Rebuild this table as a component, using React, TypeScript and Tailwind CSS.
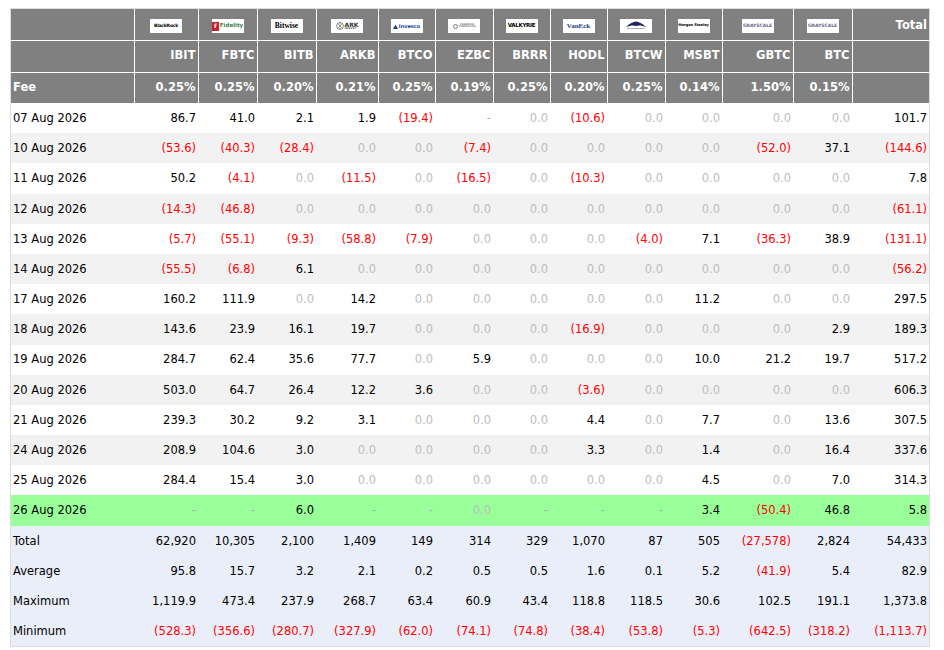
const tickers = ["IBIT", "FBTC", "BITB", "ARKB", "BTCO", "EZBC", "BRRR", "HODL", "BTCW", "MSBT", "GBTC", "BTC"]
const fees = ["0.25%", "0.25%", "0.20%", "0.21%", "0.25%", "0.19%", "0.25%", "0.20%", "0.25%", "0.14%", "1.50%", "0.15%"]
const widths = [123, 64, 59, 59, 62, 57, 58, 57, 57, 58, 57, 71, 59, 77]

type Row = { label: string; values: string[]; kind?: "today" | "summary" }

const rows: Row[] = [
  { label: "07 Aug 2026", values: ["86.7", "41.0", "2.1", "1.9", "(19.4)", "-", "0.0", "(10.6)", "0.0", "0.0", "0.0", "0.0", "101.7"] },
  { label: "10 Aug 2026", values: ["(53.6)", "(40.3)", "(28.4)", "0.0", "0.0", "(7.4)", "0.0", "0.0", "0.0", "0.0", "(52.0)", "37.1", "(144.6)"] },
  { label: "11 Aug 2026", values: ["50.2", "(4.1)", "0.0", "(11.5)", "0.0", "(16.5)", "0.0", "(10.3)", "0.0", "0.0", "0.0", "0.0", "7.8"] },
  { label: "12 Aug 2026", values: ["(14.3)", "(46.8)", "0.0", "0.0", "0.0", "0.0", "0.0", "0.0", "0.0", "0.0", "0.0", "0.0", "(61.1)"] },
  { label: "13 Aug 2026", values: ["(5.7)", "(55.1)", "(9.3)", "(58.8)", "(7.9)", "0.0", "0.0", "0.0", "(4.0)", "7.1", "(36.3)", "38.9", "(131.1)"] },
  { label: "14 Aug 2026", values: ["(55.5)", "(6.8)", "6.1", "0.0", "0.0", "0.0", "0.0", "0.0", "0.0", "0.0", "0.0", "0.0", "(56.2)"] },
  { label: "17 Aug 2026", values: ["160.2", "111.9", "0.0", "14.2", "0.0", "0.0", "0.0", "0.0", "0.0", "11.2", "0.0", "0.0", "297.5"] },
  { label: "18 Aug 2026", values: ["143.6", "23.9", "16.1", "19.7", "0.0", "0.0", "0.0", "(16.9)", "0.0", "0.0", "0.0", "2.9", "189.3"] },
  { label: "19 Aug 2026", values: ["284.7", "62.4", "35.6", "77.7", "0.0", "5.9", "0.0", "0.0", "0.0", "10.0", "21.2", "19.7", "517.2"] },
  { label: "20 Aug 2026", values: ["503.0", "64.7", "26.4", "12.2", "3.6", "0.0", "0.0", "(3.6)", "0.0", "0.0", "0.0", "0.0", "606.3"] },
  { label: "21 Aug 2026", values: ["239.3", "30.2", "9.2", "3.1", "0.0", "0.0", "0.0", "4.4", "0.0", "7.7", "0.0", "13.6", "307.5"] },
  { label: "24 Aug 2026", values: ["208.9", "104.6", "3.0", "0.0", "0.0", "0.0", "0.0", "3.3", "0.0", "1.4", "0.0", "16.4", "337.6"] },
  { label: "25 Aug 2026", values: ["284.4", "15.4", "3.0", "0.0", "0.0", "0.0", "0.0", "0.0", "0.0", "4.5", "0.0", "7.0", "314.3"] },
  { label: "26 Aug 2026", kind: "today", values: ["-", "-", "6.0", "-", "-", "0.0", "-", "-", "-", "3.4", "(50.4)", "46.8", "5.8"] },
  { label: "Total", kind: "summary", values: ["62,920", "10,305", "2,100", "1,409", "149", "314", "329", "1,070", "87", "505", "(27,578)", "2,824", "54,433"] },
  { label: "Average", kind: "summary", values: ["95.8", "15.7", "3.2", "2.1", "0.2", "0.5", "0.5", "1.6", "0.1", "5.2", "(41.9)", "5.4", "82.9"] },
  { label: "Maximum", kind: "summary", values: ["1,119.9", "473.4", "237.9", "268.7", "63.4", "60.9", "43.4", "118.8", "118.5", "30.6", "102.5", "191.1", "1,373.8"] },
  { label: "Minimum", kind: "summary", values: ["(528.3)", "(356.6)", "(280.7)", "(327.9)", "(62.0)", "(74.1)", "(74.8)", "(38.4)", "(53.8)", "(5.3)", "(642.5)", "(318.2)", "(1,113.7)"] },
]

function tone(v: string) {
  if (v.startsWith("(")) return "text-[#ff0000]"
  if (v === "0.0") return "text-[#bdbdbd]"
  if (v === "-") return "text-[#b0b0b0]"
  return "text-black"
}

function Box({ children }: { children: React.ReactNode }) {
  return (
    <div className="mx-auto mt-[10px] flex h-[14px] w-[32px] items-center justify-center overflow-hidden whitespace-nowrap bg-white leading-none">
      {children}
    </div>
  )
}

const logos: React.ReactNode[] = [
  <Box key="blk">
    <span className="text-[4.5px] font-bold tracking-[-0.2px] text-black">BlackRock</span>
  </Box>,
  <Box key="fid">
    <span className="mr-[1px] flex h-[9px] w-[7px] items-center justify-center bg-[#c8202f] text-[6px] font-bold text-white">f</span>
    <span className="text-[5.5px] font-bold text-[#3a7d44]">Fidelity</span>
  </Box>,
  <Box key="bit">
    <span className="text-[7.5px] text-black [font-family:'Liberation_Serif',serif]">Bitwise</span>
  </Box>,
  <Box key="ark">
    <svg width="8" height="8" viewBox="0 0 10 10" className="mr-[1px]">
      <circle cx="5" cy="5" r="4.3" fill="none" stroke="#333" strokeWidth="0.7" />
      <path d="M2 2 L8 8 M8 2 L2 8 M5 0.7 V9.3" stroke="#333" strokeWidth="0.5" />
    </svg>
    <span className="flex flex-col items-start">
      <span className="text-[6px] text-[#333]">ARK</span>
      <span className="text-[2.5px] tracking-[0.3px] text-[#333]">INVEST</span>
    </span>
  </Box>,
  <Box key="inv">
    <svg width="5" height="5" viewBox="0 0 10 10" className="mr-[1px]">
      <path d="M0 10 L5 1 L10 10 Z" fill="#1c3f94" />
    </svg>
    <span className="text-[5px] font-bold text-[#1c3f94]">Invesco</span>
  </Box>,
  <Box key="frk">
    <span className="mr-[1px] h-[5px] w-[5px] rounded-full border-[0.5px] border-[#777]" />
    <span className="flex flex-col text-[2.5px] text-[#777]">
      <span>FRANKLIN</span>
      <span>TEMPLETON</span>
    </span>
  </Box>,
  <Box key="val">
    <span className="text-[5.5px] font-bold tracking-[-0.3px] text-black">VALKYRIE</span>
  </Box>,
  <Box key="van">
    <span className="text-[7px] font-bold text-[#1d3c8c] [font-family:'Liberation_Serif',serif]">VanEck</span>
  </Box>,
  <Box key="wis">
    <span className="flex flex-col items-center">
      <svg width="22" height="7" viewBox="0 0 22 7">
        <path d="M1 6 C5 2 8 1 11 0.5 C14 1 17 2 21 6 C17 4.5 14 4 11 5 C8 4 5 4.5 1 6 Z" fill="#23265c" />
      </svg>
      <span className="text-[2.5px] text-[#23265c] [font-family:'Liberation_Serif',serif]">WISDOMTREE</span>
    </span>
  </Box>,
  <Box key="ms">
    <span className="text-[3.6px] tracking-[-0.1px] text-black">Morgan Stanley</span>
  </Box>,
  <Box key="gs1">
    <span className="text-[4.6px] tracking-[-0.1px] text-[#6e6b8c]">GRAYSCALE</span>
  </Box>,
  <Box key="gs2">
    <span className="text-[4.6px] tracking-[-0.1px] text-[#6e6b8c]">GRAYSCALE</span>
  </Box>,
]

export default function App() {
  return (
    <div className="bg-white pl-[10px] pt-[8px] [font-family:'DejaVu_Sans',sans-serif]">
      <div className="w-[920px] border border-[#dddddd]">
        <table className="w-[918px] table-fixed border-collapse text-[11.5px]">
          <colgroup>
            {widths.map((w, i) => (
              <col key={i} style={{ width: w }} />
            ))}
          </colgroup>
          <thead className="bg-[#808080] font-bold text-white">
            <tr className="h-[31px]">
              <th className="p-0" />
              {logos.map((l, i) => (
                <th key={i} className="border-l border-white p-0 align-top">
                  {l}
                </th>
              ))}
              <th className="border-l border-white px-[2px] pt-[3px] text-right align-middle">Total</th>
            </tr>
            <tr className="h-[32px]">
              <th className="border-t border-white p-0" />
              {tickers.map((t) => (
                <th key={t} className="border-l border-t border-white px-[2px] text-right">
                  {t}
                </th>
              ))}
              <th className="border-l border-t border-white" />
            </tr>
            <tr className="h-[31px]">
              <th className="border-t border-white px-[2px] text-left">Fee</th>
              {fees.map((f, i) => (
                <th key={i} className="border-l border-t border-white px-[2px] text-right">
                  {f}
                </th>
              ))}
              <th className="border-l border-t border-white" />
            </tr>
          </thead>
          <tbody>
            {rows.map((r, i) => {
              const bg =
                r.kind === "today"
                  ? "bg-[#99ff99]"
                  : r.kind === "summary"
                    ? "bg-[#eaeef8]"
                    : i % 2 === 1
                      ? "bg-[#f2f2f2]"
                      : "bg-white"
              return (
                <tr key={r.label} className={`h-[30.2px] ${bg}`}>
                  <td className="px-[2px] pt-[1px] text-left text-black">{r.label}</td>
                  {r.values.map((v, j) => (
                    <td key={j} className={`px-[2px] pt-[1px] text-right ${tone(v)}`}>
                      {v}
                    </td>
                  ))}
                </tr>
              )
            })}
          </tbody>
        </table>
      </div>
    </div>
  )
}
